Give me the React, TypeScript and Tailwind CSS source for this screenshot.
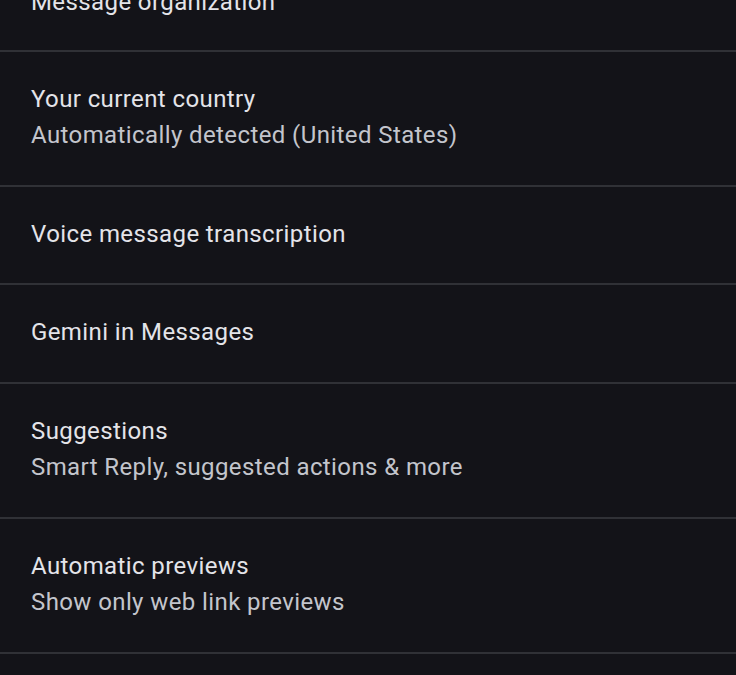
import React from "react";

type Item = { title: string; subtitle?: string; h: string };

const items: Item[] = [
  { title: "Your current country", subtitle: "Automatically detected (United States)", h: "h-[133px]" },
  { title: "Voice message transcription", h: "h-[96px]" },
  { title: "Gemini in Messages", h: "h-[97px]" },
  { title: "Suggestions", subtitle: "Smart Reply, suggested actions & more", h: "h-[133px]" },
  { title: "Automatic previews", subtitle: "Show only web link previews", h: "h-[133px]" },
];

const titleCls = "text-[24px] leading-[36px] tracking-[0.4px] text-[#e4e4e9]";
const subCls = "text-[24px] leading-[36px] tracking-[0.4px] text-[#c3c5cc]";

function Row({ item }: { item: Item }) {
  return (
    <div className={"flex flex-col justify-center px-[31px] pb-[3px] " + item.h}>
      <div className={titleCls}>{item.title}</div>
      {item.subtitle && <div className={subCls}>{item.subtitle}</div>}
    </div>
  );
}

export default function App() {
  return (
    <div
      className="w-[736px] h-[675px] overflow-hidden bg-[#131318]"
      style={{ fontFamily: "Roboto, 'Noto Sans', sans-serif" }}
    >
      <div className="-mt-[47px]">
        <div className="flex flex-col justify-center h-[97px] px-[31px]">
          <div className={titleCls}>Message organization</div>
        </div>
        {items.map((it) => (
          <React.Fragment key={it.title}>
            <div className="h-[2px] bg-[#303136]" />
            <Row item={it} />
          </React.Fragment>
        ))}
        <div className="h-[2px] bg-[#303136]" />
        <div className="h-[97px]" />
      </div>
    </div>
  );
}
